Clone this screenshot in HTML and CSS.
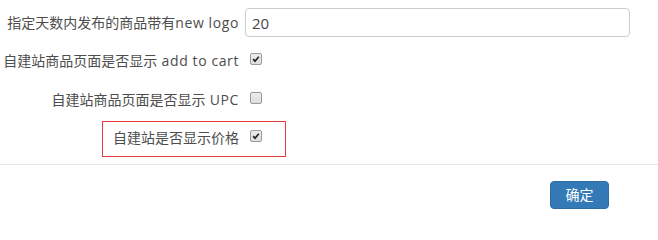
FILE: index.html
```html
<!DOCTYPE html>
<html lang="zh">
<head>
<meta charset="utf-8">
<link rel="stylesheet" href="styles.css">
</head>
<body>
<div class="form">
  <div class="row">
    <label class="label">指定天数内发布的商品带有<span class="en">new logo</span></label>
    <div class="control"><input class="text-input" type="text" value="20"></div>
  </div>
  <div class="row">
    <label class="label">自建站商品页面是否显示<span class="en"> add to cart</span></label>
    <div class="control">
      <span class="cb"><svg viewBox="0 0 12 12" width="12" height="12"><path d="M2.6 6.2 L4.8 8.6 L9.4 3.2" fill="none" stroke="#222" stroke-width="2"/></svg></span>
    </div>
  </div>
  <div class="row">
    <label class="label">自建站商品页面是否显示<span class="en"> UPC</span></label>
    <div class="control"><span class="cb"></span></div>
  </div>
  <div class="row row-marked">
    <span class="mark"></span>
    <label class="label">自建站是否显示价格</label>
    <div class="control">
      <span class="cb"><svg viewBox="0 0 12 12" width="12" height="12"><path d="M2.6 6.2 L4.8 8.6 L9.4 3.2" fill="none" stroke="#222" stroke-width="2"/></svg></span>
    </div>
  </div>
</div>
<div class="footer">
  <button class="btn-primary" type="button">确定</button>
</div>
</body>
</html>
```
FILE: styles.css
```css
html, body {
  margin: 0;
  padding: 0;
  background: #fff;
}
body {
  font-family: "Open Sans", "Noto Sans CJK SC", sans-serif;
  font-size: 14px;
  color: #4d4d4d;
  line-height: 20px;
}
.en {
  letter-spacing: 0.6px;
}
.form {
  display: flex;
  flex-direction: column;
  gap: 9.5px;
  padding: 8px 0 11.5px 0;
}
.row {
  display: flex;
  align-items: center;
  height: 29px;
}
.row-marked {
  position: relative;
}
.mark {
  position: absolute;
  left: 102px;
  top: -2.5px;
  width: 182px;
  height: 34px;
  border: 1px solid #e23b3b;
}
.label {
  width: 239px;
  text-align: right;
  white-space: nowrap;
  flex: none;
}
.control {
  margin-left: 6px;
  display: flex;
  align-items: center;
}
.text-input {
  box-sizing: border-box;
  width: 385px;
  height: 29px;
  border: 1px solid #ccc;
  border-radius: 4px;
  padding: 0 6px;
  font-family: "Open Sans", "Noto Sans CJK SC", sans-serif;
  font-size: 15px;
  color: #444;
  outline: none;
}
.cb {
  box-sizing: border-box;
  width: 12px;
  height: 12px;
  margin-left: 5px;
  margin-bottom: 4px;
  border: 1px solid #9a9a9a;
  border-radius: 2px;
  background: linear-gradient(#ececec, #dedede);
  display: flex;
  align-items: center;
  justify-content: center;
}
.cb svg {
  display: block;
  width: 10px;
  height: 10px;
}
.footer {
  border-top: 1px solid #e5e5e5;
  padding: 16px 49px 0 0;
  display: flex;
  justify-content: flex-end;
}
.btn-primary {
  width: 59px;
  height: 28px;
  background: #337ab7;
  border: 1px solid #2e6da4;
  border-radius: 4px;
  color: #fff;
  font-family: "Open Sans", "Noto Sans CJK SC", sans-serif;
  font-size: 14px;
  padding: 0;
  line-height: 26px;
}
```
